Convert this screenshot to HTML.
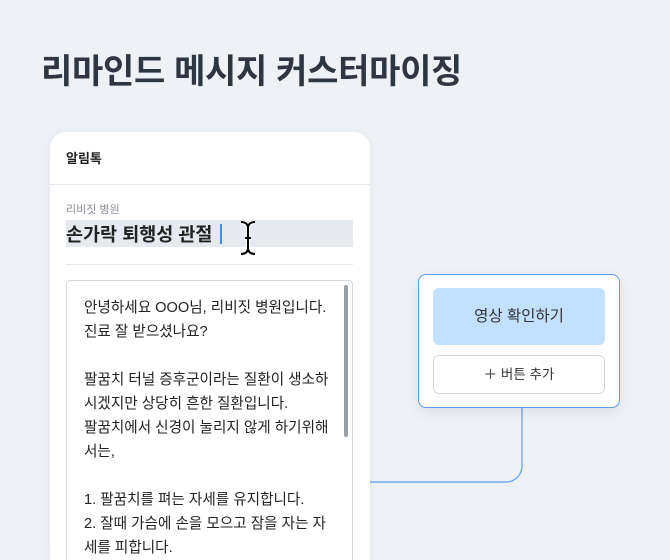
<!DOCTYPE html>
<html><head><meta charset="utf-8"><style>
*{margin:0;padding:0;box-sizing:border-box}
html,body{width:670px;height:560px;overflow:hidden}
body{background:#eef2f6;font-family:"Liberation Sans","Noto Sans CJK KR",sans-serif;position:relative;color:#222}
.title{position:absolute;left:41px;top:44px;font-size:34px;font-weight:700;color:#2e3644;letter-spacing:-0.3px;white-space:nowrap}
.card{position:absolute;left:50px;top:132px;width:320px;height:428px;background:#fff;border-radius:16px 16px 0 0;box-shadow:0 2px 10px rgba(0,0,0,0.06);overflow:hidden}
.hd{position:absolute;left:16px;top:16px;font-size:13px;font-weight:700;color:#222}
.hl{position:absolute;left:0;right:0;top:52px;height:1px;background:#e4e8ee}
.lab{position:absolute;left:16px;top:69px;font-size:11px;color:#8b8f96}
.sel{position:absolute;left:16px;top:88px;width:287px;height:27px;background:#e6e9ef}
.tt{position:absolute;left:16px;top:89px;font-size:18.5px;font-weight:700;color:#222;white-space:nowrap}
.caret{position:absolute;left:170px;top:92px;width:2px;height:20px;background:#3d8ff5}
.dl{position:absolute;left:16px;top:132px;width:287px;height:1px;background:#e4e8ee}
.ta{position:absolute;left:16px;top:148px;width:287px;height:290px;border:1px solid #d5dae1;border-radius:4px}
.sb{position:absolute;left:277px;top:4px;width:4px;height:152px;background:#9a9ea5;border-radius:2px}
.txt{position:absolute;left:17px;top:15px;font-size:14.6px;line-height:24px;color:#222;white-space:pre}
.rc{position:absolute;left:418px;top:274px;width:202px;height:134px;background:#fff;border:1px solid #5b9cf0;border-radius:8px;box-shadow:0 4px 12px rgba(0,0,0,0.08)}
.b1{position:absolute;left:14px;top:13px;width:172px;height:57px;background:#c2e0ff;border-radius:6px;font-size:15.5px;color:#333;text-align:center;line-height:57px}
.b2{position:absolute;left:14px;top:80px;width:172px;height:39px;border:1px solid #d3d7dd;border-radius:6px;font-size:13.5px;color:#333;text-align:center;line-height:37px}
</style></head><body>
<div class="title">리마인드 메시지 커스터마이징</div>
<svg style="position:absolute;left:0;top:0" width="670" height="560"><path d="M522 408 V466 A16 16 0 0 1 506 482 H370" fill="none" stroke="#5b9cf0" stroke-width="1.2"/></svg>
<div class="card">
<div class="hd">알림톡</div><div class="hl"></div>
<div class="lab">리비짓 병원</div>
<div class="sel"></div>
<div class="tt">손가락 퇴행성 관절</div>
<div class="caret"></div>
<svg style="position:absolute;left:186px;top:86px" width="24" height="40"><path d="M5 4 Q11 4 12 9 Q13 4 19 4 M12 9 V32 M5 36 Q11 36 12 31 Q13 36 19 36 M9 20 H15" fill="none" stroke="#fff" stroke-width="4.5"/><path d="M5 4 Q11 4 12 9 Q13 4 19 4 M12 9 V32 M5 36 Q11 36 12 31 Q13 36 19 36 M9 20 H15" fill="none" stroke="#000" stroke-width="2"/></svg>
<div class="dl"></div>
<div class="ta"><div class="sb"></div><div class="txt">안녕하세요 OOO님, 리비짓 병원입니다.
진료 잘 받으셨나요?

팔꿈치 터널 증후군이라는 질환이 생소하
시겠지만 상당히 흔한 질환입니다.
팔꿈치에서 신경이 눌리지 않게 하기위해
서는,

1. 팔꿈치를 펴는 자세를 유지합니다.
2. 잘때 가슴에 손을 모으고 잠을 자는 자
세를 피합니다.</div></div>
</div>
<div class="rc"><div class="b1">영상 확인하기</div><div class="b2">＋ 버튼 추가</div></div>
</body></html>
